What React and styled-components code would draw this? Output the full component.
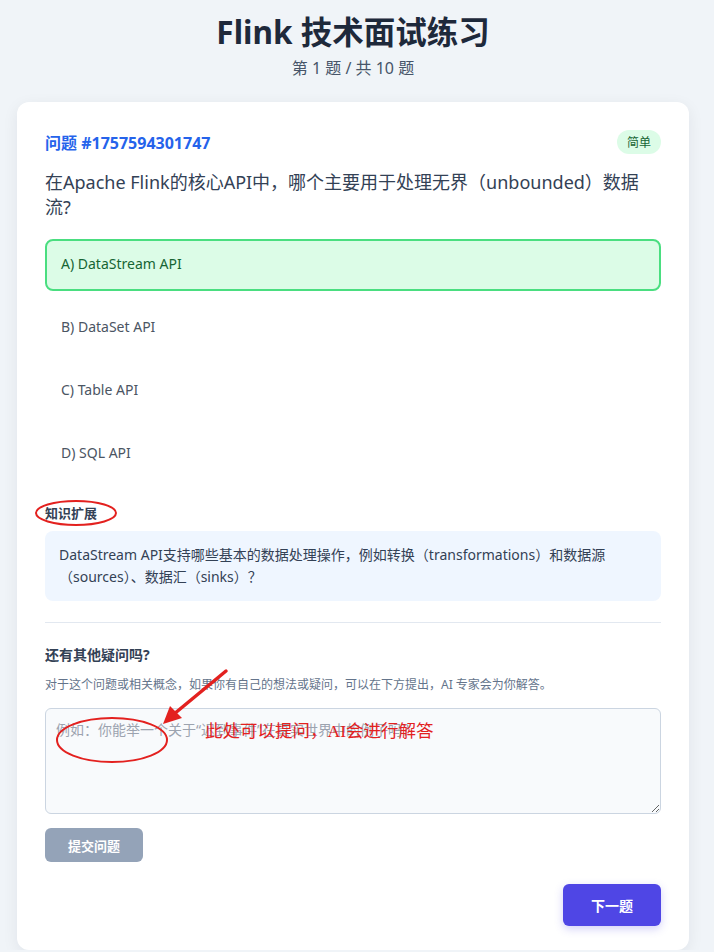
import React from "react";
import styled, { createGlobalStyle } from "styled-components";

const Global = createGlobalStyle`
  html, body { margin: 0; padding: 0; background: #f0f4f8; }
  body { font-family: "Noto Sans", "Noto Sans CJK SC", sans-serif; }
  * { box-sizing: border-box; }
`;

const Page = styled.div`
  position: relative;
  width: 706px;
  padding: 12px 17px 0;
`;

const Title = styled.h1`
  margin: 0;
  text-align: center;
  font-size: 31.5px;
  line-height: 40px;
  font-weight: 700;
  color: #1e293b;
`;

const Subtitle = styled.p`
  margin: 5px 0 0;
  text-align: center;
  font-size: 16px;
  line-height: 22px;
  color: #475569;
`;

const Card = styled.div`
  margin-top: 23px;
  background: #fff;
  border-radius: 12px;
  box-shadow: 0 4px 16px rgba(15, 23, 42, 0.07);
  padding: 28px 28px 24px;
`;

const HeaderRow = styled.div`
  display: flex;
  justify-content: space-between;
  align-items: center;
  height: 24px;
`;

const QId = styled.div`
  font-size: 16px;
  font-weight: 700;
  color: #2563eb;
`;

const Badge = styled.span`
  display: inline-flex;
  align-items: center;
  height: 24px;
  padding: 0 10px;
  border-radius: 999px;
  background: #dcfce7;
  color: #166534;
  font-size: 12px;
`;

const Question = styled.p`
  margin: 16px 0 19px;
  font-size: 18px;
  line-height: 25px;
  color: #334155;
`;

const Options = styled.div`
  display: flex;
  flex-direction: column;
  gap: 11px;
  margin-bottom: 23px;
`;

const Option = styled.div`
  height: 52px;
  display: flex;
  align-items: center;
  padding: 0 14px 3px;
  border: 2px solid ${(p) => (p.$correct ? "#4ade80" : "transparent")};
  background: ${(p) => (p.$correct ? "#dcfce7" : "#fff")};
  color: ${(p) => (p.$correct ? "#166534" : "#4b5563")};
  border-radius: 8px;
  font-size: 14px;
`;

const SectionLabel = styled.div`
  font-size: 13px;
  line-height: 20px;
  font-weight: 700;
  color: #334155;
`;

const InfoBox = styled.div`
  margin-top: 8px;
  background: #eff6ff;
  border-radius: 8px;
  padding: 13px 14px;
  font-size: 14px;
  line-height: 22px;
  color: #334155;
`;

const Divider = styled.hr`
  margin: 21px 0 0;
  border: none;
  border-top: 1px solid #e2e8f0;
`;

const AskTitle = styled.div`
  margin-top: 22px;
  font-size: 14px;
  line-height: 20px;
  font-weight: 700;
  color: #334155;
`;

const AskDesc = styled.p`
  margin: 11px 0 0;
  font-size: 12px;
  line-height: 18px;
  color: #64748b;
`;

const TextArea = styled.textarea`
  display: block;
  margin-top: 14px;
  width: 100%;
  height: 106px;
  padding: 10px 10px;
  border: 1px solid #cbd5e1;
  border-radius: 6px;
  background: #f8fafc;
  font-family: "Noto Sans", "Noto Sans CJK SC", sans-serif;
  font-size: 14px;
  line-height: 22px;
  color: #334155;
  resize: vertical;
  &::placeholder { color: #9ca3af; }
`;

const SubmitButton = styled.button`
  margin-top: 14px;
  width: 98px;
  height: 34px;
  border: none;
  border-radius: 6px;
  background: #94a3b8;
  color: #fff;
  font-family: inherit;
  font-size: 13px;
  font-weight: 700;
`;

const Footer = styled.div`
  display: flex;
  justify-content: flex-end;
  margin-top: 22px;
`;

const NextButton = styled.button`
  width: 98px;
  height: 42px;
  border: none;
  border-radius: 6px;
  background: #4f46e5;
  color: #fff;
  font-family: inherit;
  font-size: 14px;
  font-weight: 700;
  box-shadow: 0 3px 8px rgba(79, 70, 229, 0.25);
`;

const Annotations = styled.svg`
  position: absolute;
  left: 0;
  top: 0;
  pointer-events: none;
`;

const AnnotationText = styled.div`
  position: absolute;
  left: 205px;
  top: 719px;
  font-family: "Liberation Serif", "Noto Sans CJK SC", serif;
  font-size: 17.5px;
  line-height: 24px;
  color: #e3211f;
  pointer-events: none;
  white-space: nowrap;
`;

export default function App() {
  return (
    <>
      <Global />
      <Page>
        <Title>Flink 技术面试练习</Title>
        <Subtitle>第 1 题 / 共 10 题</Subtitle>
        <Card>
          <HeaderRow>
            <QId>问题 #1757594301747</QId>
            <Badge>简单</Badge>
          </HeaderRow>
          <Question>在Apache Flink的核心API中，哪个主要用于处理无界（unbounded）数据流?</Question>
          <Options>
            <Option $correct>A) DataStream API</Option>
            <Option>B) DataSet API</Option>
            <Option>C) Table API</Option>
            <Option>D) SQL API</Option>
          </Options>
          <SectionLabel>知识扩展</SectionLabel>
          <InfoBox>
            DataStream API支持哪些基本的数据处理操作，例如转换（transformations）和数据源（sources）、数据汇（sinks）？
          </InfoBox>
          <Divider />
          <AskTitle>还有其他疑问吗?</AskTitle>
          <AskDesc>对于这个问题或相关概念，如果你有自己的想法或疑问，可以在下方提出，AI 专家会为你解答。</AskDesc>
          <TextArea placeholder="例如：你能举一个关于“迟到事件”在真实世界中的例子吗？" />
          <SubmitButton>提交问题</SubmitButton>
          <Footer>
            <NextButton>下一题</NextButton>
          </Footer>
        </Card>
        <Annotations width="714" height="952" viewBox="0 0 714 952">
          <ellipse cx="76" cy="513" rx="40" ry="12" fill="none" stroke="#e3211f" strokeWidth="2" />
          <ellipse cx="112" cy="740" rx="55" ry="22" fill="none" stroke="#e3211f" strokeWidth="2" />
          <line x1="226" y1="671" x2="174" y2="714" stroke="#e3211f" strokeWidth="3.5" strokeLinecap="round" />
          <polygon points="163,724 170,706 182,718" fill="#e3211f" />
        </Annotations>
        <AnnotationText>此处可以提问，AI会进行解答</AnnotationText>
      </Page>
    </>
  );
}
